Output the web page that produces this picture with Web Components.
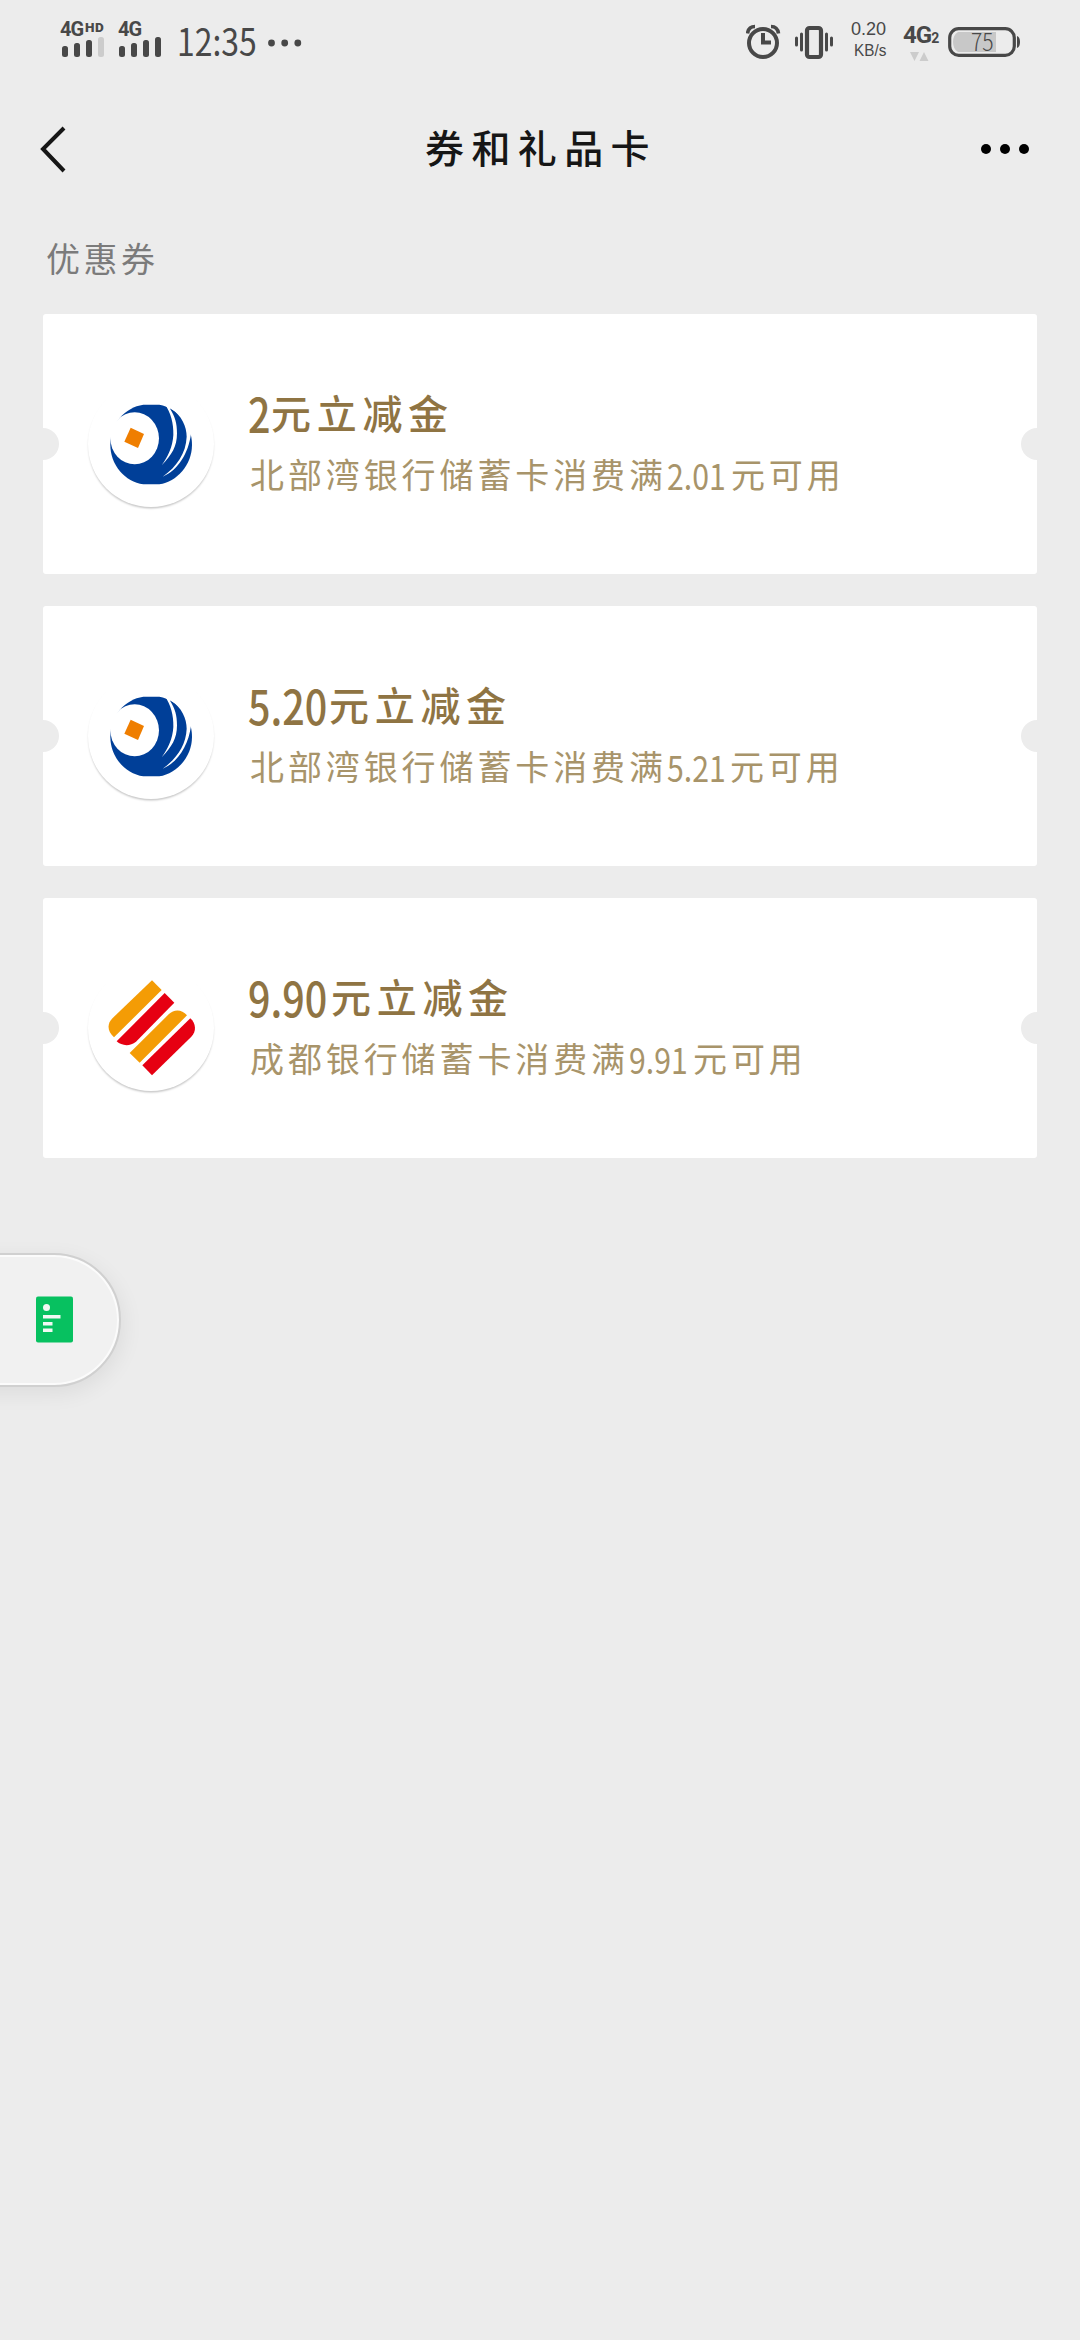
<!DOCTYPE html>
<html lang="zh-CN">
<head>
<meta charset="utf-8">
<title>券和礼品卡</title>
<style>
html,body{margin:0;background:#ececec}
body{width:1080px;height:2340px;overflow:hidden;font-family:"Noto Sans CJK SC",sans-serif}
</style>
</head>
<body>
<coupon-page></coupon-page>
<script>
const define = (name, html) => {
  const t = document.createElement('template');
  t.innerHTML = html;
  customElements.define(name, class extends HTMLElement {
    constructor() {
      super();
      this.attachShadow({mode: 'open'}).append(t.content.cloneNode(true));
    }
  });
};

define('narrow-text', `
<style>
:host{display:inline-block;letter-spacing:0;line-height:1;white-space:nowrap}
span{display:inline-block;transform:scaleX(var(--narrow,.8));transform-origin:0 50%}
</style><span><slot></slot></span>`);

define('sim-signal', `
<style>
:host{display:flex;flex-direction:column;height:36px;color:#484848;font-family:Roboto,sans-serif;font-weight:700}
.label{display:flex;align-items:flex-start;height:15px;line-height:14px;font-size:20px;letter-spacing:-1px}
::slotted([slot=sup]){font-size:13.5px;line-height:11px;letter-spacing:.4px;margin-left:2px;font-weight:900}
svg{display:block}
</style>
<div class="label"><slot></slot><slot name="sup"></slot></div><slot name="bars"></slot>`);

define('status-bar', `
<style>
:host{display:flex;justify-content:space-between;height:80px;padding:0 59px 0 60px;box-sizing:border-box;color:#484848}
.side{display:flex;align-items:flex-start;padding-top:22px}
svg{display:block;flex:none}
.clock{font:400 38px/38px "Noto Sans CJK SC",sans-serif;width:80px;margin:-1px 0 0 14px;--narrow:.84}
.speed{width:39px;margin:-4px 0 0 17px}
.speed narrow-text{display:block;font:19px/22px "Liberation Sans",sans-serif;height:22px;padding-left:1px;--narrow:.95}
.speed narrow-text+narrow-text{font-size:17px;padding-left:4px;--narrow:.9}
.net{width:35px;margin:4px 0 0 14px;font:700 24px/18px Roboto,sans-serif;letter-spacing:-1px;white-space:nowrap}
.net small{font-size:14px}
.net svg{margin:5px 0 0 7px}
.bat{display:grid;margin:5px 0 0 10px}
.bat>*{grid-area:1/1}
.bat narrow-text{font:300 24px/28px "Noto Sans CJK SC",sans-serif;padding-left:23px;--narrow:.88}
</style>
<div class="side">
  <sim-signal style="width:58px">4G<span slot="sup">HD</span>
    <svg slot="bars" width="46" height="21"><g fill="#484848"><rect x="2" y="9" width="6" height="11" rx="2.5"/><rect x="14" y="6" width="6" height="14" rx="2.5"/><rect x="26" y="3" width="6" height="17" rx="2.5"/></g><rect x="38" y="0" width="6" height="20" rx="2.5" fill="#ccc"/></svg>
  </sim-signal>
  <sim-signal style="width:45px">4G
    <svg slot="bars" width="45" height="21"><g fill="#484848"><rect x="1" y="9" width="6" height="11" rx="2.5"/><rect x="13" y="6" width="6" height="14" rx="2.5"/><rect x="25" y="3" width="6" height="17" rx="2.5"/><rect x="37" y="0" width="6" height="20" rx="2.5"/></g></svg>
  </sim-signal>
  <narrow-text class="clock">12:35</narrow-text>
  <svg width="36" height="10" style="margin:16px 0 0 10px" fill="#484848"><circle cx="4.500" cy="5" r="3.400"/><circle cx="17.700" cy="5" r="3.400"/><circle cx="30.800" cy="5" r="3.400"/></svg>
</div>
<div class="side">
  <svg width="35" height="36" viewBox="0 0 35 36" style="margin-top:2px" fill="none" stroke="#484848"><circle cx="17" cy="19" r="14" stroke-width="4"/><path d="M17 9V18.500H25" stroke-width="4"/><path d="M1.500 9.500Q2.500 2.500 9 2.500M32.500 9.500Q31.500 2.500 25 2.500" stroke-width="3.600"/></svg>
  <svg width="38" height="36" viewBox="0 0 38 36" style="margin:2px 0 0 14px" fill="none" stroke="#484848" stroke-linecap="round"><rect x="12" y="4" width="14" height="29" rx="2.500" stroke-width="4.200"/><path d="M1.500 14V21M6.500 10V26M31.500 10V26M36.500 14V21" stroke-width="3"/></svg>
  <div class="speed"><narrow-text>0.20</narrow-text><narrow-text>KB/s</narrow-text></div>
  <div class="net">4G<small>2</small><svg width="20" height="10" fill="#ccc"><path d="M0 0H9L4.500 9ZM9.500 9H18.500L14 0Z"/></svg></div>
  <div class="bat">
    <svg width="73" height="30" viewBox="0 0 73 30"><path d="M10 5H48V25H10Q5 22 5 15T10 5Z" fill="#c8c8c8"/><rect x="1.700" y="1.700" width="64.600" height="26.600" rx="9" fill="none" stroke="#484848" stroke-width="3.200"/><path d="M69 9Q72 10 72 15T69 21Z" fill="#484848"/></svg>
    <narrow-text>75</narrow-text>
  </div>
</div>`);

define('nav-bar', `
<style>
:host{display:flex;align-items:center;justify-content:space-between;height:138px;padding:0 49px 0 40px;box-sizing:border-box}
svg{display:block}
h1{margin:0 0 6px 14px;font:500 39px/60px "Noto Sans CJK SC",sans-serif;letter-spacing:7.4px;color:#161616}
</style>
<svg width="48" height="48" fill="none" stroke="#161616" stroke-width="4"><path d="M24 3L3 24L24 46"/></svg>
<h1><slot></slot></h1>
<svg width="51" height="12"><circle cx="6" cy="6" r="5"/><circle cx="25" cy="6" r="5"/><circle cx="44" cy="6" r="5"/></svg>`);

define('coupon-card', `
<style>
:host{display:flex;align-items:center;justify-content:space-between;height:260px;background:#fff;border-radius:3px;overflow:hidden}
.notch{width:32px;height:32px;border-radius:50%;background:#ececec;margin:0 -16px;flex:none}
.logo{width:126px;height:126px;border-radius:50%;box-shadow:0 2px 2px -.5px rgba(0,0,0,.22);flex:none;margin-left:45px}
.copy{flex:1;min-width:0;margin-left:34px;white-space:nowrap;padding-bottom:3px}
.title,.sub{display:flex;align-items:center}
.title{height:63px;color:#8f7443;font-size:40px;font-weight:500;letter-spacing:5.7px;line-height:63px}
.sub{height:60px;color:#a8946a;font-size:34px;font-weight:400;letter-spacing:3.9px;line-height:60px;padding-left:2px}
</style>
<div class="notch"></div><div class="logo"><slot name="logo"></slot></div>
<div class="copy"><div class="title"><slot name="title"></slot></div><div class="sub"><slot></slot></div></div>
<div class="notch"></div>`);

define('bay-logo', `
<style>:host,svg{display:block}</style>
<svg width="126" height="126" viewBox="174 243 378 378">
<path d="M340 314H388C445 325 486 375 486 434C486 495 440 545 388 553H340C285 545 241 495 241 434C241 370 285 322 340 314Z" fill="#003f98"/>
<g fill="#fff"><ellipse cx="314" cy="415" rx="73" ry="78"/><path d="M220 350L263 366L243 410L220 415Z"/>
<path d="M403 310C423 340 431 370 430 405C428 440 414 470 395 496C425 465 441 440 441 400C441 370 435 350 421 328L423 310Z"/>
<path d="M423 326C455 345 470 380 470 410C468 460 440 500 398 530C445 510 475 460 483 402L510 395L480 320L423 300Z"/></g>
<path d="M302 383L342 402L324 444L283 425Z" fill="#ef7e00"/>
</svg>`);

define('stripe-logo', `
<style>:host,svg{display:block}</style>
<svg width="126" height="126" viewBox="174 225 378 378">
<g fill="#f49c05"><path d="M366 271L395 300L252 442C233 424 230 403 246 386Z"/><path d="M299 489L416 373C432 357 455 357 471 376L329 518Z"/></g>
<g fill="#e60012"><path d="M404 309L433 338L318 455C300 470 275 468 260 454Z"/><path d="M481 385C498 401 500 424 484 440L366 556L337 526Z"/></g>
</svg>`);

define('float-tab', `
<style>
:host{position:absolute;left:-70px;top:1253px;width:191px;height:134px;box-sizing:border-box;border:2px solid #d0d0d0;border-radius:0 67px 67px 0;background:#f1f1f1;box-shadow:inset 0 0 0 2px #fbfbfb,2px 6px 22px rgba(0,0,0,.07);display:flex;align-items:center;padding-left:104px}
svg{display:block;margin-bottom:2px}
</style>
<svg width="37" height="47"><rect y="0.500" width="37" height="46" rx="2" fill="#07c160"/><g fill="#f1f8f3"><circle cx="10.500" cy="11.500" r="3.500"/><path d="M7 19h17.500v3.500H7zM7 26h9.500v3.500H7zM7 32.500h9.500V36H7z"/></g></svg>`);

define('coupon-page', `
<style>
:host{display:block;width:1080px;height:2340px;background:#ececec}
h2{margin:0;padding-left:46px;height:96px;font:400 34px/80px "Noto Sans CJK SC",sans-serif;letter-spacing:3.5px;color:#7b7b7b;box-sizing:border-box}
.list{display:flex;flex-direction:column;gap:32px;padding:0 43px}
.t{font-size:47px;font-weight:500;--narrow:.84}
.s{font-size:36px;font-weight:400;--narrow:.84}
</style>
<status-bar></status-bar>
<nav-bar>券和礼品卡</nav-bar>
<h2>优惠券</h2>
<div class="list">
<coupon-card><bay-logo slot="logo"></bay-logo><narrow-text slot="title" class="t" style="width:23px">2</narrow-text><span slot="title">元立减金</span><span>北部湾银行储蓄卡消费满</span><narrow-text class="s" style="width:64px">2.01</narrow-text><span>元可用</span></coupon-card>
<coupon-card><bay-logo slot="logo"></bay-logo><narrow-text slot="title" class="t" style="width:81px">5.20</narrow-text><span slot="title">元立减金</span><span>北部湾银行储蓄卡消费满</span><narrow-text class="s" style="width:63px">5.21</narrow-text><span>元可用</span></coupon-card>
<coupon-card><stripe-logo slot="logo"></stripe-logo><narrow-text slot="title" class="t" style="width:83px">9.90</narrow-text><span slot="title">元立减金</span><span>成都银行储蓄卡消费满</span><narrow-text class="s" style="width:64px">9.91</narrow-text><span>元可用</span></coupon-card>
</div>
<float-tab></float-tab>`);
</script>
</body>
</html>
